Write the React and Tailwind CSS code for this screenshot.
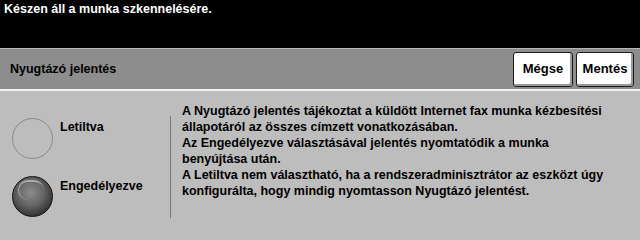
const font = { fontFamily: '"Liberation Sans", Arial, sans-serif' };

const Button = ({ children, className }) => (
  <button
    type="button"
    className={`flex h-[35px] items-center justify-center rounded-[3px] border border-[#1a1a1a] bg-white text-[13px] font-bold text-black shadow-[inset_-2px_-2px_0_#9a9a9a,inset_2px_2px_0_#ffffff] ${className}`}
  >
    {children}
  </button>
);

const App = () => {
  return (
    <div className="flex h-[240px] w-[640px] flex-col overflow-hidden bg-[#bdbdbd]" style={font}>
      <div className="h-[48px] bg-black px-[4px] pt-[1px] text-[12.5px] font-bold leading-[16px] text-white">
        Készen áll a munka szkennelésére.
      </div>

      <div className="flex h-[41px] items-center border-t border-[#b8b8b8] bg-[#8d8d8d] pl-[10px] pr-[6px]">
        <span className="flex-1 text-[12.5px] font-bold text-black">Nyugtázó jelentés</span>
        <div className="flex gap-[3px]">
          <Button className="w-[60px]">Mégse</Button>
          <Button className="w-[58px]">Mentés</Button>
        </div>
      </div>

      <div className="flex flex-1 border-t-2 border-[#f2f2f2]">
        <div className="flex w-[170px] flex-col gap-[17px] pl-[12px] pt-[27px]">
          <div className="flex items-start gap-[7px]">
            <div className="h-[41px] w-[41px] rounded-full border border-[#8a8a8a] bg-[#bdbdbd]" />
            <span className="text-[12.5px] font-bold text-black">Letiltva</span>
          </div>
          <div className="flex items-start gap-[7px]">
            <div className="relative h-[41px] w-[41px] rounded-full border border-[#111] bg-[radial-gradient(circle_at_45%_40%,#8c8c8c_0%,#666_40%,#333_75%,#141414_100%)]">
              <div className="absolute left-[5px] top-[3px] h-[20px] w-[26px] rounded-full border-t-2 border-l border-[#c8c8c8]/70" />
            </div>
            <span className="pt-[1px] text-[12.5px] font-bold text-black">Engedélyezve</span>
          </div>
        </div>

        <div className="mt-[25px] mb-[22px] w-px bg-[#7a7a7a]" />

        <div className="pl-[11px] pt-[12px] text-[12.5px] font-bold leading-[16px] text-black">
          <p>A Nyugtázó jelentés tájékoztat a küldött Internet fax munka kézbesítési</p>
          <p>állapotáról az összes címzett vonatkozásában.</p>
          <p>Az Engedélyezve választásával jelentés nyomtatódik a munka</p>
          <p>benyújtása után.</p>
          <p>A Letiltva nem választható, ha a rendszeradminisztrátor az eszközt úgy</p>
          <p>konfigurálta, hogy mindig nyomtasson Nyugtázó jelentést.</p>
        </div>
      </div>
    </div>
  );
};

export default App;
